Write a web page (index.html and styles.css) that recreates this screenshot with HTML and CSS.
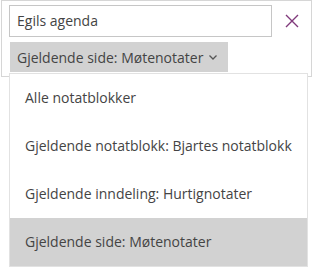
FILE: index.html
```html
<!DOCTYPE html>
<html lang="nb">
<head>
    <meta charset="UTF-8">
    <meta name="viewport" content="width=device-width, initial-scale=1.0">
    <title>Søk</title>
    <link rel="stylesheet" href="styles.css">
</head>
<body>
    <div class="search">
        <div class="panel">
            <div class="row">
                <div class="input">Egils agenda</div>
                <button class="close" aria-label="Lukk">
                    <svg width="14" height="14" viewBox="0 0 14 14">
                        <path d="M1 1L13 13M13 1L1 13" stroke="#80397b" stroke-width="1.4" fill="none"/>
                    </svg>
                </button>
            </div>
            <div class="scope">
                <span>Gjeldende side: Møtenotater</span>
                <svg class="chev" width="8" height="5" viewBox="0 0 8 5">
                    <path d="M0.5 0.5L4 4L7.5 0.5" stroke="#555" stroke-width="1.3" fill="none"/>
                </svg>
            </div>
        </div>

        <ul class="menu">
            <li>Alle notatblokker</li>
            <li>Gjeldende notatblokk: Bjartes notatblokk</li>
            <li>Gjeldende inndeling: Hurtignotater</li>
            <li class="selected">Gjeldende side: Møtenotater</li>
        </ul>
    </div>
</body>
</html>
```

FILE: styles.css
```css
body{
    margin:0;
    background:#fff;
    font-family:"Open Sans","Noto Sans",sans-serif;
    font-size:14px;
    color:#444;
}
.search{
    position:relative;
    width:313px;
    height:267px;
}
.panel{
    margin-left:1px;
    width:311px;
    height:77px;
    box-sizing:border-box;
    border:1px solid #d6d6d6;
    padding:4px 0 0 7px;
}
.row{
    display:flex;
    align-items:center;
}
.input{
    width:264px;
    height:32px;
    box-sizing:border-box;
    border:1px solid #c6c6c6;
    padding-left:7px;
    line-height:29px;
    white-space:nowrap;
}
.close{
    width:39px;
    height:32px;
    border:none;
    background:none;
    padding:0;
    display:flex;
    justify-content:center;
    align-items:center;
}
.scope{
    margin:5px 0 0 1px;
    width:218px;
    height:30px;
    box-sizing:border-box;
    background:#d2d2d2;
    padding:0 11px 0 7px;
    display:flex;
    justify-content:space-between;
    align-items:center;
    white-space:nowrap;
}
.menu{
    position:absolute;
    top:73px;
    left:9px;
    width:299px;
    margin:0;
    padding:0;
    list-style:none;
    box-sizing:border-box;
    border:1px solid #e2e2e2;
    background:#fff;
}
.menu li{
    height:48px;
    line-height:48px;
    padding-left:15px;
    white-space:nowrap;
}
.menu li.selected{
    background:#d2d2d2;
}
```
